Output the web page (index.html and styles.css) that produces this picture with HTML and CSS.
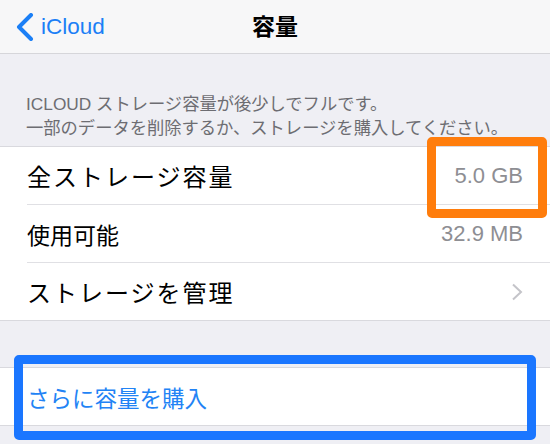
FILE: index.html
```html
<!DOCTYPE html>
<html lang="ja">
<head>
<meta charset="utf-8">
<link rel="stylesheet" href="styles.css">
</head>
<body>
<div class="screen">
  <header class="nav">
    <div class="back">
      <svg class="back-chevron" width="18" height="28" viewBox="0 0 18 28"><polyline points="15,2 3,14 15,26" fill="none" stroke="#1b7ff6" stroke-width="4" stroke-linecap="round" stroke-linejoin="round"/></svg>
      <span class="back-label">iCloud</span>
    </div>
    <div class="title">容量</div>
    <div></div>
  </header>
  <main class="content">
    <div class="section-note">
      <div>ICLOUD ストレージ容量が後少しでフルです。</div>
      <div>一部のデータを削除するか、ストレージを購入してください。</div>
    </div>
    <div class="group">
      <div class="row">
        <div class="row-inner">
          <span class="label label-wide">全ストレージ容量</span>
          <span class="value">5.0 GB</span>
        </div>
        <div class="mark mark-orange"></div>
      </div>
      <div class="row">
        <div class="row-inner">
          <span class="label">使用可能</span>
          <span class="value">32.9 MB</span>
        </div>
      </div>
      <div class="row">
        <div class="row-inner last">
          <span class="label label-wide">ストレージを管理</span>
          <svg class="disclosure" width="12" height="18" viewBox="0 0 12 18"><polyline points="2,1.5 10,9 2,16.5" fill="none" stroke="#c4c4c9" stroke-width="2"/></svg>
        </div>
      </div>
    </div>
    <div class="group group-buy">
      <div class="row">
        <div class="row-inner last">
          <span class="label link">さらに容量を購入</span>
        </div>
        <div class="mark mark-blue"></div>
      </div>
    </div>
  </main>
</div>
</body>
</html>
```

FILE: styles.css
```css
html, body {
  margin: 0;
  padding: 0;
}
body {
  width: 550px;
  height: 444px;
  overflow: hidden;
  background: #efeff4;
  font-family: "Liberation Sans", "Noto Sans CJK JP", sans-serif;
}
.screen {
  width: 550px;
  height: 444px;
  overflow: hidden;
  background: #efeff4;
}
.nav {
  height: 53px;
  background: #f7f7f8;
  border-bottom: 1px solid #d6d6da;
  display: grid;
  grid-template-columns: 1fr auto 1fr;
  align-items: center;
}
.back {
  display: flex;
  align-items: center;
  gap: 7px;
  padding-left: 16px;
}
.back-chevron {
  display: block;
}
.back-label {
  color: #1b7ff6;
  font-size: 22.5px;
  line-height: 28px;
}
.title {
  font-size: 23px;
  font-weight: bold;
  color: #000;
  line-height: 28px;
}
.content {
  background: #efeff4;
}
.section-note {
  padding: 38px 0 6px 26px;
  font-size: 17.3px;
  line-height: 24px;
  color: #6d6d72;
}
.group {
  background: #fff;
  border-top: 1px solid #d9d9de;
  border-bottom: 1px solid #d9d9de;
}
.group-buy {
  margin-top: 46px;
}
.row {
  position: relative;
  padding-left: 27px;
}
.row-inner {
  height: 57px;
  border-bottom: 1px solid #e0e0e4;
  display: flex;
  align-items: center;
  justify-content: space-between;
  padding-right: 27px;
}
.row-inner.last {
  border-bottom: none;
}
.label {
  font-size: 23px;
  color: #000;
}
.label-wide {
  font-size: 24px;
  letter-spacing: 2px;
}
.label.link {
  color: #2283f5;
  font-size: 22.5px;
}
.value {
  font-size: 22px;
  color: #8e8e93;
}
.disclosure {
  display: block;
}
.mark {
  position: absolute;
  box-sizing: border-box;
  border-radius: 5px;
  pointer-events: none;
}
.mark-orange {
  left: 427px;
  top: -10px;
  width: 120px;
  height: 81px;
  border: 9px solid #ff7d0c;
}
.mark-blue {
  left: 14px;
  top: -13px;
  width: 522px;
  height: 85px;
  border: 9.5px solid #1a76ff;
}
```
